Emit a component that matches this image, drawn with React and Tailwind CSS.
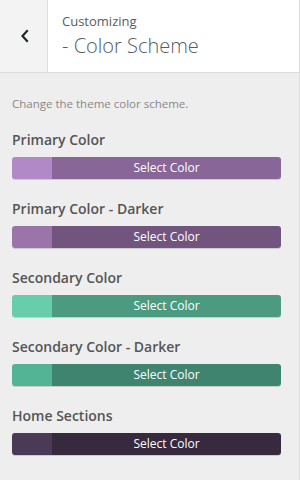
export default function App() {
  const items = [
    { label: "Primary Color", swatch: "bg-[#b089c6]", main: "bg-[#886698]" },
    { label: "Primary Color - Darker", swatch: "bg-[#9b74a9]", main: "bg-[#72557e]" },
    { label: "Secondary Color", swatch: "bg-[#67cdaa]", main: "bg-[#4c9a80]" },
    { label: "Secondary Color - Darker", swatch: "bg-[#53b495]", main: "bg-[#3e846f]" },
    { label: "Home Sections", swatch: "bg-[#4b3a56]", main: "bg-[#372a3e]" },
  ];
  return (
    <div
      className="w-[300px] h-[480px] bg-[#eeeeee] border-r border-[#dddddd] overflow-hidden"
      style={{ fontFamily: '"Open Sans", "Noto Sans", sans-serif' }}
    >
      <div className="h-[73px] flex border-b border-[#dddddd] bg-white">
        <div className="w-[48px] bg-[#f3f3f3] border-r border-[#dddddd] flex items-center justify-center">
          <svg width="10" height="14" viewBox="0 0 10 14" className="ml-[2px]">
            <path d="M7 2 L2.5 7 L7 12" fill="none" stroke="#23282d" strokeWidth="2.2" strokeLinecap="square" />
          </svg>
        </div>
        <div className="flex-1 pl-[14px] pt-[11px]">
          <div className="text-[13px] leading-[20px] text-[#555d66]">Customizing</div>
          <div className="text-[20px] leading-[28px] text-[#555d66] font-light mt-[1px]">- Color Scheme</div>
        </div>
      </div>
      <div className="pl-3 pr-[18px] pt-[22px]">
        <div className="text-[11.5px] leading-[18px] text-[#888888]">Change the theme color scheme.</div>
        <div className="mt-[17px] flex flex-col gap-[20px]">
          {items.map((it) => (
            <div key={it.label}>
              <div className="text-[14px] leading-[20px] font-semibold text-[#555555]">{it.label}</div>
              <div className="mt-[7px] h-[22px] flex rounded-[3px] overflow-hidden shadow-[0_1px_0_#cccccc]">
                <div className={`w-[40px] ${it.swatch}`} />
                <div className={`flex-1 ${it.main} flex items-center justify-center text-white text-[12px] leading-[22px]`}>
                  Select Color
                </div>
              </div>
            </div>
          ))}
        </div>
      </div>
    </div>
  );
}
